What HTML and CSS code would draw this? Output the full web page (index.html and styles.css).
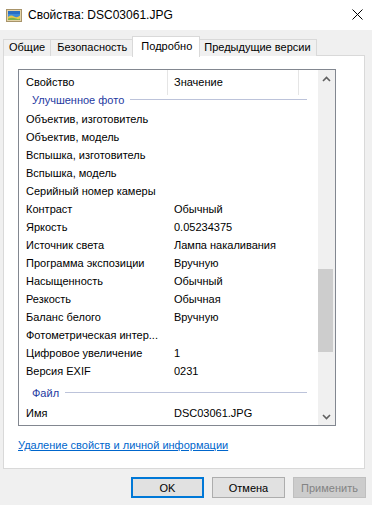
FILE: index.html
```html
<!DOCTYPE html>
<html lang="ru">
<head>
<meta charset="utf-8">
<title>Свойства: DSC03061.JPG</title>
<link rel="stylesheet" href="styles.css">
</head>
<body>
<div class="window">
  <div class="titlebar">
    <svg class="app-icon" width="16" height="13" viewBox="0 0 16 13">
      <rect x="0.5" y="0.5" width="15" height="12" fill="#e3d3a8" stroke="#a8946a"/>
      <rect x="2" y="2" width="12" height="9" fill="#3d8ad8"/>
      <rect x="2" y="2" width="12" height="3" fill="#2a6fc2"/>
      <path d="M2 8 Q5 5.5 8 7.5 T14 6.5 V11 H2 Z" fill="#e6c84a"/>
      <path d="M2 9.5 Q6 8 10 9.5 T14 9 V11 H2 Z" fill="#7fb34a"/>
    </svg>
    <span class="title">Свойства: DSC03061.JPG</span>
    <svg class="close" width="11" height="11" viewBox="0 0 11 11">
      <path d="M0.5 0.5 L10.5 10.5 M10.5 0.5 L0.5 10.5" stroke="#000" stroke-width="1"/>
    </svg>
  </div>

  <div class="tabs">
    <div class="tab">Общие</div>
    <div class="tab wide">Безопасность</div>
    <div class="tab active">Подробно</div>
    <div class="tab">Предыдущие версии</div>
  </div>

  <div class="panel">
    <div class="listbox">
      <div class="list-main">
        <div class="list-header">
          <div class="hcell col1">Свойство</div>
          <div class="hcell col2">Значение</div>
          <div class="hcell col3"></div>
        </div>
        <div class="list-body">
          <div class="group first"><span>Улучшенное фото</span><i></i></div>
          <div class="row"><span class="k">Объектив, изготовитель</span><span class="v"></span></div>
          <div class="row"><span class="k">Объектив, модель</span><span class="v"></span></div>
          <div class="row"><span class="k">Вспышка, изготовитель</span><span class="v"></span></div>
          <div class="row"><span class="k">Вспышка, модель</span><span class="v"></span></div>
          <div class="row"><span class="k">Серийный номер камеры</span><span class="v"></span></div>
          <div class="row"><span class="k">Контраст</span><span class="v">Обычный</span></div>
          <div class="row"><span class="k">Яркость</span><span class="v">0.05234375</span></div>
          <div class="row"><span class="k">Источник света</span><span class="v">Лампа накаливания</span></div>
          <div class="row"><span class="k">Программа экспозиции</span><span class="v">Вручную</span></div>
          <div class="row"><span class="k">Насыщенность</span><span class="v">Обычный</span></div>
          <div class="row"><span class="k">Резкость</span><span class="v">Обычная</span></div>
          <div class="row"><span class="k">Баланс белого</span><span class="v">Вручную</span></div>
          <div class="row"><span class="k">Фотометрическая интер...</span><span class="v"></span></div>
          <div class="row"><span class="k">Цифровое увеличение</span><span class="v">1</span></div>
          <div class="row"><span class="k">Версия EXIF</span><span class="v">0231</span></div>
          <div class="group"><span>Файл</span><i></i></div>
          <div class="row"><span class="k">Имя</span><span class="v">DSC03061.JPG</span></div>
        </div>
      </div>
      <div class="scrollbar">
        <div class="sb-btn">
          <svg width="9" height="6" viewBox="0 0 9 6"><polyline points="1,5 4.5,1.5 8,5" fill="none" stroke="#606060" stroke-width="1.6"/></svg>
        </div>
        <div class="sb-track">
          <div class="sb-thumb"></div>
        </div>
        <div class="sb-btn">
          <svg width="9" height="6" viewBox="0 0 9 6"><polyline points="1,1 4.5,4.5 8,1" fill="none" stroke="#606060" stroke-width="1.6"/></svg>
        </div>
      </div>
    </div>
    <a class="link" href="#">Удаление свойств и личной информации</a>
  </div>

  <div class="buttons">
    <button class="btn default">OK</button>
    <button class="btn">Отмена</button>
    <button class="btn disabled">Применить</button>
  </div>
</div>
</body>
</html>
```

FILE: styles.css
```css
* { box-sizing: border-box; }

html, body {
  margin: 0;
  padding: 0;
}

body {
  width: 372px;
  height: 505px;
  overflow: hidden;
  background: #f0f0f0;
  font-family: "Liberation Sans", Arial, sans-serif;
  font-size: 11px;
  color: #000;
}

.window {
  display: flex;
  flex-direction: column;
  height: 505px;
}

.titlebar {
  height: 30px;
  background: #fff;
  display: flex;
  align-items: center;
  padding-left: 6px;
  padding-right: 9px;
  flex-shrink: 0;
}

.app-icon {
  margin-right: 6px;
}

.title {
  font-size: 12px;
  flex: 1;
}

.close {
  margin-top: -1px;
}

.tabs {
  display: flex;
  align-items: flex-end;
  height: 20px;
  margin-top: 6px;
  padding-left: 3px;
  position: relative;
  z-index: 1;
}

.tab {
  height: 17px;
  line-height: 15px;
  padding: 0 5px;
  border: 1px solid #d9d9d9;
  border-bottom: none;
  background: #f0f0f0;
  margin-right: -1px;
  white-space: nowrap;
}

.tab.wide {
  padding: 0 7px 0 6px;
}

.tab.active {
  height: 21px;
  line-height: 18px;
  background: #fff;
  margin-bottom: -1px;
  padding: 0 7px 0 8px;
  margin-left: -2px;
  margin-right: -2px;
  position: relative;
  z-index: 2;
}

.panel {
  margin: -1px 7px 0 3px;
  height: 414px;
  border: 1px solid #d9d9d9;
  background: #fff;
  padding: 13px 28px 0 14px;
  display: flex;
  flex-direction: column;
  flex-shrink: 0;
}

.listbox {
  height: 357px;
  border: 1px solid #828790;
  display: flex;
  flex-shrink: 0;
}

.list-main {
  flex: 1;
  display: flex;
  flex-direction: column;
  min-width: 0;
}

.list-header {
  height: 25px;
  display: flex;
  flex-shrink: 0;
}

.hcell {
  line-height: 25px;
  white-space: nowrap;
}

.col1 {
  width: 149px;
  padding-left: 7px;
  border-right: 1px solid #e5e5e5;
}

.col2 {
  width: 131px;
  padding-left: 6px;
  border-right: 1px solid #e5e5e5;
}

.col3 {
  flex: 1;
}

.list-body {
  flex: 1;
  overflow: hidden;
}

.group {
  height: 24px;
  display: flex;
  align-items: center;
  padding: 2px 11px 0 13px;
  color: #24399f;
  white-space: nowrap;
}

.group.first {
  height: 15px;
  align-items: flex-start;
  padding-top: 0;
  line-height: 11px;
}

.group i {
  flex: 1;
  height: 1px;
  background: #bcc3da;
  margin-left: 6px;
  margin-top: -1px;
}

.group.first i {
  margin-top: 4px;
}

.row {
  height: 18px;
  line-height: 18px;
  display: flex;
  white-space: nowrap;
}

.row .k {
  width: 155px;
  padding-left: 7px;
  overflow: hidden;
}

.row .v {
  flex: 1;
}

.scrollbar {
  width: 17px;
  background: #f0f0f0;
  display: flex;
  flex-direction: column;
  flex-shrink: 0;
}

.sb-btn {
  height: 17px;
  display: flex;
  align-items: center;
  justify-content: center;
}

.sb-track {
  flex: 1;
  padding-top: 182px;
}

.sb-thumb {
  height: 83px;
  width: 15px;
  background: #cdcdcd;
}

.link {
  margin-top: 11px;
  line-height: 16px;
  color: #0066cc;
  text-decoration: underline;
  align-self: flex-start;
}

.buttons {
  display: flex;
  justify-content: flex-end;
  gap: 8px;
  padding-right: 6px;
  margin-top: 8px;
}

.btn {
  width: 73px;
  height: 21px;
  font-family: inherit;
  font-size: 11px;
  background: #e1e1e1;
  border: 1px solid #adadad;
  color: #000;
  padding: 0;
  margin: 0;
}

.btn.default {
  border: 2px solid #0078d7;
}

.btn.disabled {
  background: #cccccc;
  border-color: #bfbfbf;
  color: #838383;
}
```
